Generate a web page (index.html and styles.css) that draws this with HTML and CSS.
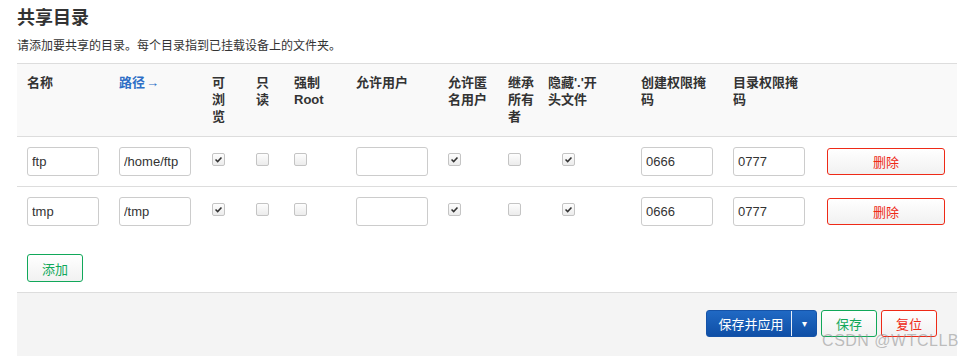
FILE: index.html
```html
<!DOCTYPE html>
<html lang="zh-CN">
<head>
<meta charset="utf-8">
<title>共享目录</title>
<link rel="stylesheet" href="styles.css">
</head>
<body>
<div class="page">
  <h2 class="title">共享目录</h2>
  <p class="desc">请添加要共享的目录。每个目录指到已挂载设备上的文件夹。</p>

  <div class="table">
    <div class="row head">
      <div class="cell">名称</div>
      <div class="cell"><span class="link">路径<span class="arrow">→</span></span></div>
      <div class="cell">可<br>浏<br>览</div>
      <div class="cell">只<br>读</div>
      <div class="cell">强制<br>Root</div>
      <div class="cell">允许用户</div>
      <div class="cell">允许匿<br>名用户</div>
      <div class="cell">继承<br>所有<br>者</div>
      <div class="cell">隐藏'.'开<br>头文件</div>
      <div class="cell">创建权限掩<br>码</div>
      <div class="cell">目录权限掩<br>码</div>
      <div class="cell"></div>
    </div>

    <div class="row body">
      <div class="cell"><input class="field" type="text" value="ftp"></div>
      <div class="cell"><input class="field" type="text" value="/home/ftp"></div>
      <div class="cell"><span class="cb checked"><svg viewBox="0 0 13 13"><path d="M3 6.5l2.5 2.5 4.5-5" /></svg></span></div>
      <div class="cell"><span class="cb"></span></div>
      <div class="cell"><span class="cb"></span></div>
      <div class="cell"><input class="field" type="text" value=""></div>
      <div class="cell"><span class="cb checked"><svg viewBox="0 0 13 13"><path d="M3 6.5l2.5 2.5 4.5-5" /></svg></span></div>
      <div class="cell"><span class="cb"></span></div>
      <div class="cell"><span class="cb shift checked"><svg viewBox="0 0 13 13"><path d="M3 6.5l2.5 2.5 4.5-5" /></svg></span></div>
      <div class="cell"><input class="field" type="text" value="0666"></div>
      <div class="cell"><input class="field" type="text" value="0777"></div>
      <div class="cell"><button class="btn btn-del" type="button">删除</button></div>
    </div>

    <div class="row body last">
      <div class="cell"><input class="field" type="text" value="tmp"></div>
      <div class="cell"><input class="field" type="text" value="/tmp"></div>
      <div class="cell"><span class="cb checked"><svg viewBox="0 0 13 13"><path d="M3 6.5l2.5 2.5 4.5-5" /></svg></span></div>
      <div class="cell"><span class="cb"></span></div>
      <div class="cell"><span class="cb"></span></div>
      <div class="cell"><input class="field" type="text" value=""></div>
      <div class="cell"><span class="cb checked"><svg viewBox="0 0 13 13"><path d="M3 6.5l2.5 2.5 4.5-5" /></svg></span></div>
      <div class="cell"><span class="cb"></span></div>
      <div class="cell"><span class="cb shift checked"><svg viewBox="0 0 13 13"><path d="M3 6.5l2.5 2.5 4.5-5" /></svg></span></div>
      <div class="cell"><input class="field" type="text" value="0666"></div>
      <div class="cell"><input class="field" type="text" value="0777"></div>
      <div class="cell"><button class="btn btn-del" type="button">删除</button></div>
    </div>
  </div>

  <div class="add-row">
    <button class="btn btn-add" type="button">添加</button>
  </div>

  <div class="footer">
    <div class="split">
      <button class="split-main" type="button">保存并应用</button>
      <button class="split-caret" type="button">▾</button>
    </div>
    <button class="btn btn-save" type="button">保存</button>
    <button class="btn btn-reset" type="button">复位</button>
    <span class="watermark">CSDN @WTCLLB</span>
  </div>
</div>
</body>
</html>
```

FILE: styles.css
```css
* { box-sizing: border-box; }

html, body {
  margin: 0;
  padding: 0;
  background: #fff;
}

body {
  font-family: "Liberation Sans", Arial, "Noto Sans CJK SC", sans-serif;
  font-size: 13px;
  color: #333;
  overflow: hidden;
}

.page {
  width: 940px;
  margin-left: 17px;
  padding-top: 6px;
}

.title {
  margin: 0;
  font-size: 18px;
  line-height: 24px;
  font-weight: bold;
  color: #333;
}

.desc {
  margin: 8px 0 0;
  font-size: 12px;
  line-height: 16px;
  color: #333;
  height: 25px;
}

.table {
  border-top: 1px solid #ddd;
}

.row {
  display: grid;
  grid-template-columns: 92px 93px 44px 38px 62px 92px 60px 40px 93px 92px 94px 140px;
}

.cell {
  padding-left: 10px;
  white-space: nowrap;
}

.head {
  background: #f9f9f9;
  border-bottom: 1px solid #ddd;
  padding: 10px 0 11px;
  font-weight: bold;
  line-height: 17px;
  font-size: 13px;
  color: #333;
}

.link {
  color: #2f6fc6;
}

.arrow {
  font-weight: normal;
  margin-left: 1px;
}

.body {
  height: 50px;
  border-bottom: 1px solid #ddd;
  align-items: start;
}

.body.last {
  border-bottom-color: transparent;
}

.body .cell {
  padding-top: 10px;
}

.field {
  display: block;
  width: 72px;
  height: 29px;
  margin: 0;
  padding: 0 4px;
  border: 1px solid #ccc;
  border-radius: 3px;
  background: #fff;
  font-family: "Liberation Sans", Arial, sans-serif;
  font-size: 13px;
  color: #333;
  outline: none;
}

.cb {
  display: block;
  width: 13px;
  height: 13px;
  margin-top: 6px;
  border: 1px solid #c4c4c4;
  border-radius: 2px;
  background: linear-gradient(#fdfdfd, #ececec);
}

.cb svg {
  display: block;
  width: 11px;
  height: 11px;
}

.cb path {
  fill: none;
  stroke: #333;
  stroke-width: 1.8;
}

.cb.shift {
  margin-left: 14px;
}

.btn {
  margin: 0;
  padding: 0;
  border-radius: 3px;
  background: linear-gradient(#ffffff, #f1f1f1);
  font-family: "Liberation Sans", Arial, "Noto Sans CJK SC", sans-serif;
  font-size: 13px;
  cursor: pointer;
}

.btn-del {
  display: block;
  width: 118px;
  height: 27px;
  margin-top: 1px;
  border: 1px solid #ee2a17;
  color: #ee2a17;
}

.add-row {
  padding: 17px 0 10px 10px;
}

.btn-add {
  display: block;
  width: 56px;
  height: 28px;
  border: 1px solid #11a85a;
  color: #11a85a;
}

.footer {
  position: relative;
  display: flex;
  justify-content: flex-end;
  align-items: center;
  gap: 4px;
  height: 70px;
  padding: 17px 20px 0 0;
  align-content: flex-start;
  align-items: flex-start;
  background: #f4f4f4;
  border-top: 1px solid #ddd;
  border-radius: 0 0 3px 3px;
}

.split {
  display: flex;
  height: 27px;
  border-radius: 3px;
  overflow: hidden;
  background: linear-gradient(#2069c4, #0f4fa6);
  border: 1px solid #1553a8;
}

.split-main,
.split-caret {
  margin: 0;
  border: 0;
  background: transparent;
  color: #fff;
  font-family: "Liberation Sans", Arial, "Noto Sans CJK SC", sans-serif;
  font-size: 13px;
  padding: 0;
}

.split-main {
  width: 85px;
  padding-left: 4px;
  border-right: 1px solid #e8eef8;
}

.split-caret {
  width: 24px;
  font-size: 10px;
}

.btn-save {
  width: 56px;
  height: 27px;
  border: 1px solid #11a85a;
  color: #11a85a;
}

.btn-reset {
  width: 56px;
  height: 27px;
  border: 1px solid #ee2a17;
  color: #ee2a17;
}

.watermark {
  position: absolute;
  right: -2px;
  top: 39px;
  font-family: "Liberation Sans", Arial, sans-serif;
  font-size: 16px;
  letter-spacing: 0.5px;
  color: rgba(140, 140, 140, 0.55);
  pointer-events: none;
}
```
